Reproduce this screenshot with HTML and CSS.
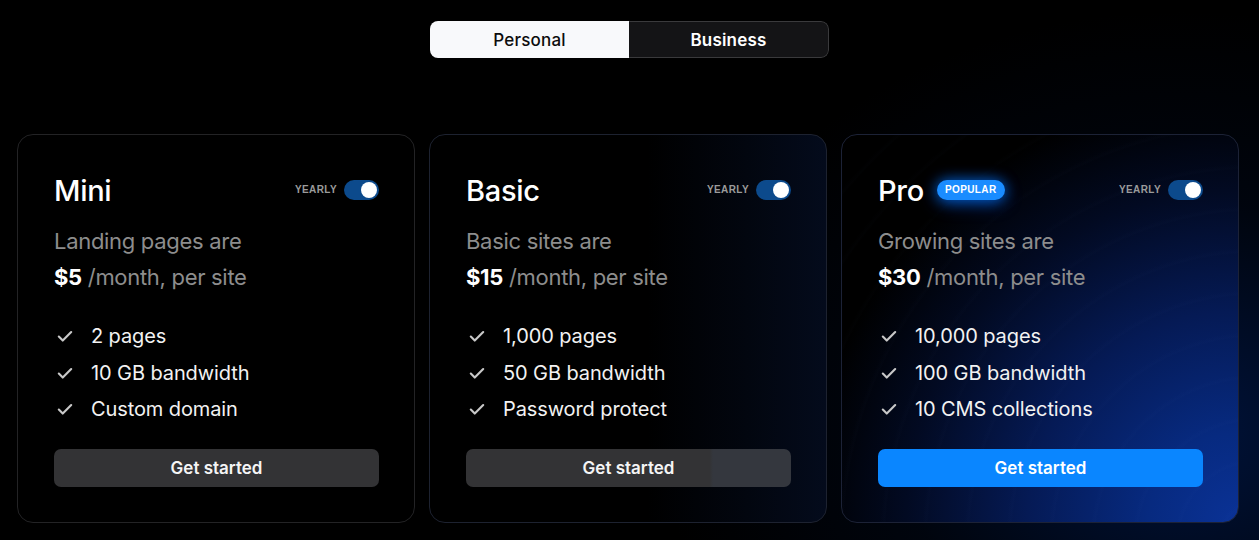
FILE: index.html
```html
<!DOCTYPE html>
<html lang="en">
<head>
<meta charset="utf-8">
<title>Pricing</title>
<link rel="stylesheet" href="styles.css">
</head>
<body>
<div class="page">
  <div class="segment">
    <div class="seg seg-active">Personal</div>
    <div class="seg seg-inactive">Business</div>
  </div>

  <div class="cards">
    <div class="card card-mini">
      <div class="card-head">
        <div class="title-wrap"><h2 class="title">Mini</h2></div>
        <div class="yearly"><span class="yearly-label">YEARLY</span><span class="switch"><span class="knob"></span></span></div>
      </div>
      <p class="sub">Landing pages are</p>
      <p class="price"><b>$5</b> /month, per site</p>
      <ul class="features">
        <li><svg class="check" viewBox="0 0 16 16"><path d="M2.5 8.5l3.5 3.5 7.5-7.5"/></svg>2 pages</li>
        <li><svg class="check" viewBox="0 0 16 16"><path d="M2.5 8.5l3.5 3.5 7.5-7.5"/></svg>10 GB bandwidth</li>
        <li><svg class="check" viewBox="0 0 16 16"><path d="M2.5 8.5l3.5 3.5 7.5-7.5"/></svg>Custom domain</li>
      </ul>
      <div class="btn btn-dark">Get started</div>
    </div>

    <div class="card card-basic">
      <div class="card-head">
        <div class="title-wrap"><h2 class="title">Basic</h2></div>
        <div class="yearly"><span class="yearly-label">YEARLY</span><span class="switch"><span class="knob"></span></span></div>
      </div>
      <p class="sub">Basic sites are</p>
      <p class="price"><b>$15</b> /month, per site</p>
      <ul class="features">
        <li><svg class="check" viewBox="0 0 16 16"><path d="M2.5 8.5l3.5 3.5 7.5-7.5"/></svg>1,000 pages</li>
        <li><svg class="check" viewBox="0 0 16 16"><path d="M2.5 8.5l3.5 3.5 7.5-7.5"/></svg>50 GB bandwidth</li>
        <li><svg class="check" viewBox="0 0 16 16"><path d="M2.5 8.5l3.5 3.5 7.5-7.5"/></svg>Password protect</li>
      </ul>
      <div class="btn btn-dark btn-basic">Get started</div>
    </div>

    <div class="card card-pro">
      <div class="card-head">
        <div class="title-wrap"><h2 class="title">Pro</h2><span class="badge">POPULAR</span></div>
        <div class="yearly"><span class="yearly-label">YEARLY</span><span class="switch"><span class="knob"></span></span></div>
      </div>
      <p class="sub">Growing sites are</p>
      <p class="price"><b>$30</b> /month, per site</p>
      <ul class="features">
        <li><svg class="check" viewBox="0 0 16 16"><path d="M2.5 8.5l3.5 3.5 7.5-7.5"/></svg>10,000 pages</li>
        <li><svg class="check" viewBox="0 0 16 16"><path d="M2.5 8.5l3.5 3.5 7.5-7.5"/></svg>100 GB bandwidth</li>
        <li><svg class="check" viewBox="0 0 16 16"><path d="M2.5 8.5l3.5 3.5 7.5-7.5"/></svg>10 CMS collections</li>
      </ul>
      <div class="btn btn-blue">Get started</div>
    </div>
  </div>
</div>
</body>
</html>
```

FILE: styles.css
```css
* { box-sizing: border-box; }

html, body {
  margin: 0;
  padding: 0;
  height: 100%;
}

body {
  background-color: #000;
  background-image:
    radial-gradient(ellipse 520px 420px at 1180px 430px, rgba(0, 45, 140, 0.42), rgba(0, 30, 90, 0.15) 55%, rgba(0, 0, 0, 0) 100%);
  font-family: Inter, "Noto Sans", "Liberation Sans", sans-serif;
  color: #fff;
  overflow: hidden;
}

.page {
  width: 1259px;
  height: 540px;
  padding-top: 21px;
  display: flex;
  flex-direction: column;
  align-items: center;
}

.segment {
  display: flex;
  width: 399px;
  height: 37px;
  border-radius: 8px;
  overflow: hidden;
}

.seg {
  flex: 1;
  display: flex;
  align-items: center;
  justify-content: center;
  font-size: 17px;
  letter-spacing: 0.2px;
}

.seg-active {
  background: #f8f9fb;
  color: #0c0c0c;
  font-weight: 500;
}

.seg-inactive {
  background: #141416;
  color: #fff;
  font-weight: 600;
  border: 1px solid #3a3a3c;
  border-left: none;
  border-radius: 0 8px 8px 0;
}

.cards {
  align-self: flex-start;
  margin-top: 76px;
  margin-left: 17px;
  display: flex;
  gap: 14px;
}

.card {
  width: 398px;
  height: 389px;
  border: 1px solid #232325;
  border-radius: 16px;
  padding: 35px 35px 35px 36px;
  background: #000;
  display: flex;
  flex-direction: column;
}

.card-basic {
  background: linear-gradient(90deg, #000 0%, #000 55%, #02060f 80%, #040b1c 100%);
  border-color: #1d2230;
}

.card-pro {
  border-color: #1c2236;
  background:
    repeating-radial-gradient(circle at 105% 105%, rgba(255,255,255,0) 0px, rgba(255,255,255,0) 36px, rgba(120,160,255,0.012) 38px, rgba(255,255,255,0) 42px),
    radial-gradient(circle at 100% 100%, #0a3296 0%, #072a80 16%, #051a55 38%, #020a22 60%, #000 78%);
}

.card-head {
  height: 40px;
  display: flex;
  align-items: center;
  justify-content: space-between;
}

.title-wrap {
  display: flex;
  align-items: center;
  gap: 13px;
}

.title {
  margin: 0;
  font-size: 29px;
  font-weight: 500;
  letter-spacing: -0.3px;
  color: #fff;
  position: relative;
  top: 1px;
}

.badge {
  height: 20px;
  padding: 0 8px;
  border-radius: 10px;
  background: #1a8cff;
  color: #fff;
  font-family: "Liberation Sans", Arial, sans-serif;
  font-size: 10px;
  font-weight: 700;
  letter-spacing: 0.4px;
  display: flex;
  align-items: center;
  box-shadow: 0 0 14px rgba(0, 120, 255, 0.7), 0 4px 18px rgba(0, 100, 255, 0.45);
}

.yearly {
  display: flex;
  align-items: center;
  gap: 7px;
}

.yearly-label {
  font-family: "Liberation Sans", Arial, sans-serif;
  font-size: 10px;
  font-weight: 700;
  letter-spacing: 0.4px;
  color: #9b9b9b;
}

.switch {
  width: 35px;
  height: 20px;
  border-radius: 10px;
  background: #0c4a8c;
  display: flex;
  align-items: center;
  justify-content: flex-end;
  padding-right: 2px;
}

.knob {
  width: 16px;
  height: 16px;
  border-radius: 50%;
  background: #fff;
}

.sub {
  margin: 13px 0 0;
  font-size: 22px;
  line-height: 36px;
  color: #8d8d8d;
  letter-spacing: -0.3px;
}

.price {
  margin: 0;
  font-size: 22px;
  line-height: 36px;
  color: #8d8d8d;
  letter-spacing: -0.3px;
}

.price b {
  color: #fff;
  font-weight: 700;
}

.features {
  list-style: none;
  margin: 23px 0 0;
  padding: 0;
}

.features li {
  display: flex;
  align-items: center;
  height: 36.5px;
  font-size: 20px;
  color: #f2f2f2;
  letter-spacing: -0.1px;
}

.check {
  width: 18px;
  height: 18px;
  margin-left: 2px;
  margin-right: 17px;
  fill: none;
  stroke: #c8c8c8;
  stroke-width: 1.9;
  stroke-linecap: round;
  stroke-linejoin: round;
}

.btn {
  margin-top: 22px;
  height: 38px;
  border-radius: 7px;
  display: flex;
  align-items: center;
  justify-content: center;
  font-size: 17px;
  font-weight: 600;
  color: #f5f5f5;
}

.btn-dark {
  background: #333335;
}

.btn-basic {
  background: linear-gradient(90deg, #333335 0%, #333335 75%, #34373e 76%, #34373e 100%);
}

.btn-blue {
  background: #0a86ff;
  color: #fff;
}
```
